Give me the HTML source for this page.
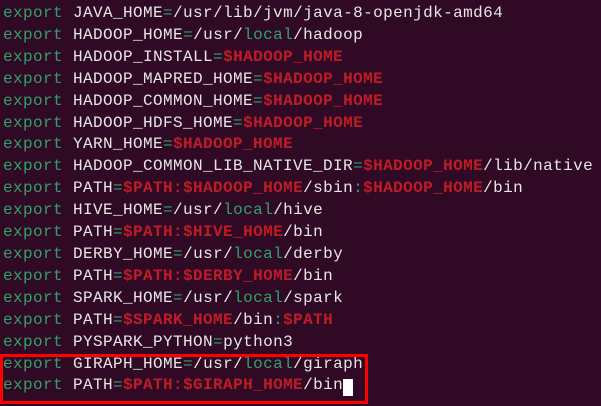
<!DOCTYPE html>
<html><head><meta charset="utf-8"><style>
html,body{margin:0;padding:0;}
body{width:601px;height:406px;background:#300a24;overflow:hidden;position:relative;}
pre{margin:0;position:absolute;left:3px;top:3px;font-family:"Liberation Mono",monospace;font-size:16px;letter-spacing:0.4px;line-height:21.9px;color:#e6e6e6;}
.g{color:#2fa26a}.r{color:#c01c28;font-weight:bold}
.box{position:absolute;left:0;top:354px;width:362px;height:44px;border:3px solid #f00;}
.cur{position:absolute;left:343px;top:379px;width:10px;height:17px;background:#fff;}
</style></head><body>
<pre><span class="g">export</span> JAVA_HOME<span class="g">=</span>/usr/lib/jvm/java-8-openjdk-amd64
<span class="g">export</span> HADOOP_HOME<span class="g">=</span>/usr/<span class="g">local</span>/hadoop
<span class="g">export</span> HADOOP_INSTALL<span class="g">=</span><span class="r">$HADOOP_HOME</span>
<span class="g">export</span> HADOOP_MAPRED_HOME<span class="g">=</span><span class="r">$HADOOP_HOME</span>
<span class="g">export</span> HADOOP_COMMON_HOME<span class="g">=</span><span class="r">$HADOOP_HOME</span>
<span class="g">export</span> HADOOP_HDFS_HOME<span class="g">=</span><span class="r">$HADOOP_HOME</span>
<span class="g">export</span> YARN_HOME<span class="g">=</span><span class="r">$HADOOP_HOME</span>
<span class="g">export</span> HADOOP_COMMON_LIB_NATIVE_DIR<span class="g">=</span><span class="r">$HADOOP_HOME</span>/lib/native
<span class="g">export</span> PATH<span class="g">=</span><span class="r">$PATH:$HADOOP_HOME</span>/sbin<span class="g">:</span><span class="r">$HADOOP_HOME</span>/bin
<span class="g">export</span> HIVE_HOME<span class="g">=</span>/usr/<span class="g">local</span>/hive
<span class="g">export</span> PATH<span class="g">=</span><span class="r">$PATH:$HIVE_HOME</span>/bin
<span class="g">export</span> DERBY_HOME<span class="g">=</span>/usr/<span class="g">local</span>/derby
<span class="g">export</span> PATH<span class="g">=</span><span class="r">$PATH:$DERBY_HOME</span>/bin
<span class="g">export</span> SPARK_HOME<span class="g">=</span>/usr/<span class="g">local</span>/spark
<span class="g">export</span> PATH<span class="g">=</span><span class="r">$SPARK_HOME</span>/bin<span class="g">:</span><span class="r">$PATH</span>
<span class="g">export</span> PYSPARK_PYTHON<span class="g">=</span>python3
<span class="g">export</span> GIRAPH_HOME<span class="g">=</span>/usr/<span class="g">local</span>/giraph
<span class="g">export</span> PATH<span class="g">=</span><span class="r">$PATH:$GIRAPH_HOME</span>/bin</pre>
<div class="cur"></div>
<div class="box"></div>
</body></html>
